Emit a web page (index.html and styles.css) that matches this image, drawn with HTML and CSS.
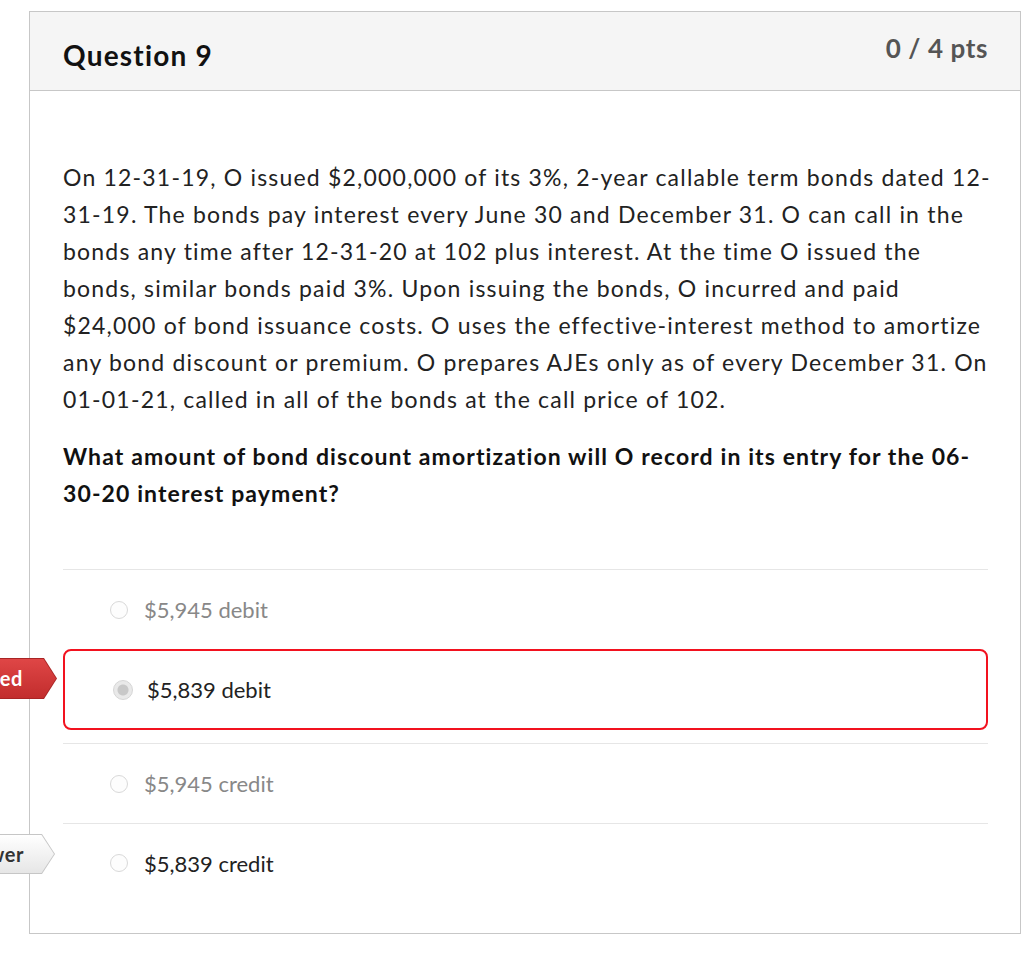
FILE: index.html
```html
<!DOCTYPE html>
<html>
<head>
<meta charset="utf-8">
<link rel="stylesheet" href="styles.css">
</head>
<body>
<div class="question">
  <div class="q-header">
    <h2 class="q-title">Question 9</h2>
    <span class="q-points">0 / 4 pts</span>
  </div>
  <div class="q-body">
    <p class="q-text">On 12-31-19, O issued $2,000,000 of its 3%, 2-year callable term bonds dated 12-31-19. The bonds pay interest every June 30 and December 31. O can call in the bonds any time after 12-31-20 at 102 plus interest. At the time O issued the bonds, similar bonds paid 3%. Upon issuing the bonds, O incurred and paid $24,000 of bond issuance costs. O uses the effective-interest method to amortize any bond discount or premium. O prepares AJEs only as of every December 31. On 01-01-21, called in all of the bonds at the call price of 102.</p>
    <p class="q-ask">What amount of bond discount amortization will O record in its entry for the 06-30-20 interest payment?</p>
    <div class="answers">
      <div class="answer faded">
        <span class="radio"></span>
        <span class="a-text">$5,945 debit</span>
      </div>
      <div class="answer selected">
        <span class="badge badge-wrong"><span class="badge-in">You Answered</span></span>
        <span class="radio checked"></span>
        <span class="a-text">$5,839 debit</span>
      </div>
      <div class="answer faded">
        <span class="radio"></span>
        <span class="a-text">$5,945 credit</span>
      </div>
      <div class="answer">
        <span class="badge badge-correct"><span class="badge-in">Correct Answer</span></span>
        <span class="radio"></span>
        <span class="a-text">$5,839 credit</span>
      </div>
    </div>
  </div>
</div>
</body>
</html>
```

FILE: styles.css
```css
html, body {
  margin: 0;
  padding: 0;
  background: #fff;
}
body {
  font-family: Lato, "Liberation Sans", sans-serif;
  color: #222;
  padding: 11px 3px 0 29px;
}
.question {
  width: 990px;
  border: 1px solid #c7c7c7;
  background: #fff;
}
.q-header {
  display: flex;
  justify-content: space-between;
  align-items: flex-start;
  height: 79px;
  box-sizing: border-box;
  background: #f5f5f5;
  border-bottom: 1px solid #c7c7c7;
  padding: 0 32px 0 33px;
}
.q-title {
  margin: 26px 0 0 0;
  font-size: 28px;
  font-weight: 700;
  letter-spacing: 1.2px;
  color: #111;
  line-height: 34px;
}
.q-points {
  margin-top: 20px;
  font-size: 26px;
  font-weight: 700;
  letter-spacing: 0.6px;
  color: #555;
  line-height: 32px;
}
.q-body {
  padding: 68px 32px 31px 33px;
}
.q-text, .q-ask {
  margin: 0;
  font-size: 23px;
  letter-spacing: 1.2px;
  line-height: 37px;
}
.q-text {
  margin-right: -5px;
}
.q-ask {
  margin-top: 20px;
  font-weight: 700;
  letter-spacing: 1.1px;
  color: #111;
}
.answers {
  margin-top: 57px;
}
.answer {
  position: relative;
  display: flex;
  align-items: center;
  height: 80px;
  box-sizing: border-box;
  border-top: 1px solid #e6e6e6;
  padding-left: 47px;
  font-size: 22px;
}
.answer.faded .a-text {
  color: #888;
}
.answer.selected {
  height: 81px;
  border: 2px solid #f2121f;
  border-radius: 8px;
  padding-left: 49px;
  margin-bottom: 13px;
}
.answer:last-child {
  height: 79px;
}
.radio {
  width: 18px;
  height: 18px;
  box-sizing: border-box;
  border-radius: 50%;
  border: 1px solid #d9d9d9;
  background: #fdfdfd;
  margin-right: 16px;
  flex: none;
}
.radio.checked {
  width: 20px;
  height: 20px;
  border: 1px solid #d6d6d6;
  background: radial-gradient(circle, #c8c8c8 0, #c8c8c8 5px, #e9e9e9 6px);
  margin-left: -1px;
  margin-right: 14px;
}
.badge {
  position: absolute;
  right: calc(100% + 8px);
  height: 41px;
  box-sizing: border-box;
  padding: 1px;
  white-space: nowrap;
  clip-path: polygon(0 0, calc(100% - 13px) 0, 100% 50%, calc(100% - 13px) 100%, 0 100%);
}
.badge-in {
  display: block;
  height: 39px;
  line-height: 39px;
  padding: 0 33px 0 12px;
  font-size: 20px;
  font-weight: 700;
  letter-spacing: 0.6px;
  clip-path: polygon(0 0, calc(100% - 12.5px) 0, 100% 50%, calc(100% - 12.5px) 100%, 0 100%);
}
.badge-wrong {
  top: 7px;
  background: #a92424;
}
.badge-wrong .badge-in {
  color: #fff;
  background: linear-gradient(#df4646, #c22d2d);
}
.badge-correct {
  top: 10px;
  height: 40px;
  background: #c6c6c6;
}
.badge-correct .badge-in {
  height: 38px;
  line-height: 38px;
  padding-right: 30px;
  color: #333;
  background: linear-gradient(#ffffff, #e6e6e6);
}
```
